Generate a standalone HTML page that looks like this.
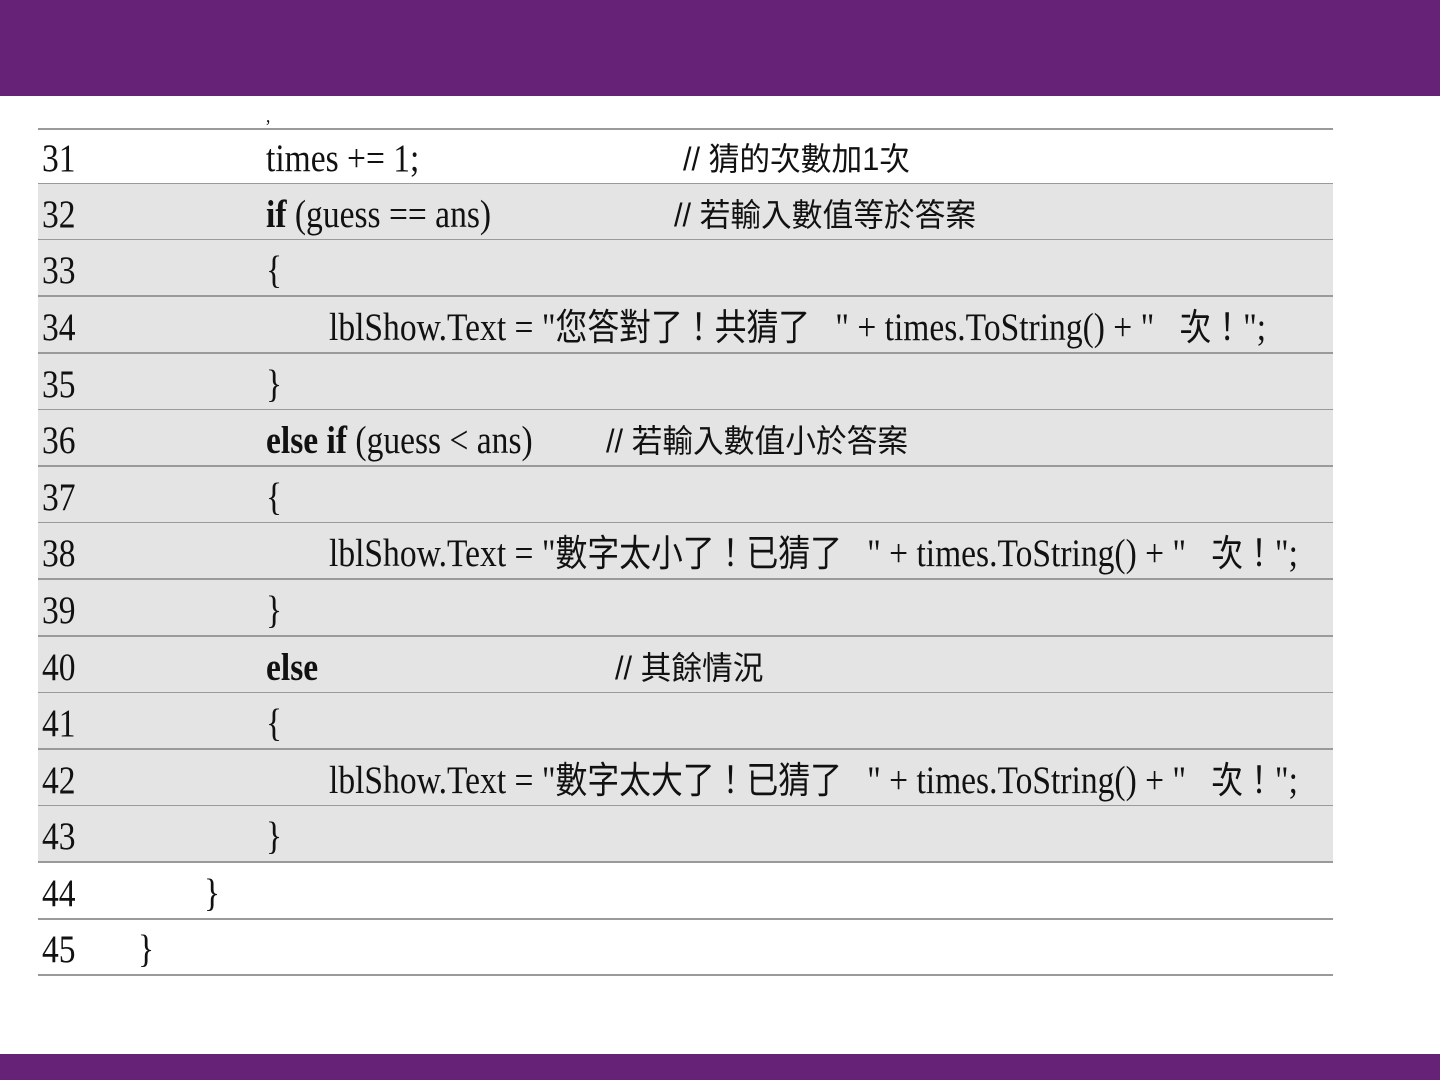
<!DOCTYPE html>
<html><head><meta charset="utf-8"><style>
body{margin:0;width:1440px;height:1080px;background:#fff;position:relative;overflow:hidden;font-family:"Liberation Serif","Noto Sans CJK TC",serif;color:#111}
.top{position:absolute;left:0;top:0;width:1440px;height:96px;background:#662277}
.bot{position:absolute;left:0;top:1054px;width:1440px;height:26px;background:#662277}
.row{position:absolute;left:38px;width:1295px;height:57px;border-bottom:2px solid #9a9a9a;box-sizing:border-box}
.g{background:#e4e4e4}
.t{position:absolute;top:9px;font-size:39px;line-height:44px;white-space:pre;transform:scaleX(0.86);transform-origin:0 0}
.c{font-family:"Liberation Sans","Noto Sans CJK TC",sans-serif;font-size:32px;transform:scaleX(0.96)}
.k{font-size:37px}
b{font-weight:bold}
</style></head><body>
<div class="top"></div>
<div class="row" style="top:72px;height:58px"><span class="t" style="left:228px;top:22px;font-size:20px">,</span></div>
<div class="row" style="top:128px"><span class="t" style="left:4px">31</span><span class="t" style="left:228px">times += 1;</span><span class="t c" style="left:645px">// 猜的次數加1次</span></div>
<div class="row g" style="top:184px"><span class="t" style="left:4px">32</span><span class="t" style="left:228px"><b>if</b> (guess == ans)</span><span class="t c" style="left:636px">// 若輸入數值等於答案</span></div>
<div class="row g" style="top:240px"><span class="t" style="left:4px">33</span><span class="t" style="left:228px">{</span></div>
<div class="row g" style="top:297px"><span class="t" style="left:4px">34</span><span class="t" style="left:291px">lblShow.Text = "<span class="k">您答對了！共猜了</span>   " + times.ToString() + "   <span class="k">次！</span>";</span></div>
<div class="row g" style="top:354px"><span class="t" style="left:4px">35</span><span class="t" style="left:228px">}</span></div>
<div class="row g" style="top:410px"><span class="t" style="left:4px">36</span><span class="t" style="left:228px"><b>else if</b> (guess &lt; ans)</span><span class="t c" style="left:568px">// 若輸入數值小於答案</span></div>
<div class="row g" style="top:467px"><span class="t" style="left:4px">37</span><span class="t" style="left:228px">{</span></div>
<div class="row g" style="top:523px"><span class="t" style="left:4px">38</span><span class="t" style="left:291px">lblShow.Text = "<span class="k">數字太小了！已猜了</span>   " + times.ToString() + "   <span class="k">次！</span>";</span></div>
<div class="row g" style="top:580px"><span class="t" style="left:4px">39</span><span class="t" style="left:228px">}</span></div>
<div class="row g" style="top:637px"><span class="t" style="left:4px">40</span><span class="t" style="left:228px"><b>else</b></span><span class="t c" style="left:577px">// 其餘情況</span></div>
<div class="row g" style="top:693px"><span class="t" style="left:4px">41</span><span class="t" style="left:228px">{</span></div>
<div class="row g" style="top:750px"><span class="t" style="left:4px">42</span><span class="t" style="left:291px">lblShow.Text = "<span class="k">數字太大了！已猜了</span>   " + times.ToString() + "   <span class="k">次！</span>";</span></div>
<div class="row g" style="top:806px"><span class="t" style="left:4px">43</span><span class="t" style="left:228px">}</span></div>
<div class="row" style="top:863px"><span class="t" style="left:4px">44</span><span class="t" style="left:166px">}</span></div>
<div class="row" style="top:919px"><span class="t" style="left:4px">45</span><span class="t" style="left:100px">}</span></div>
<div class="bot"></div>
</body></html>
